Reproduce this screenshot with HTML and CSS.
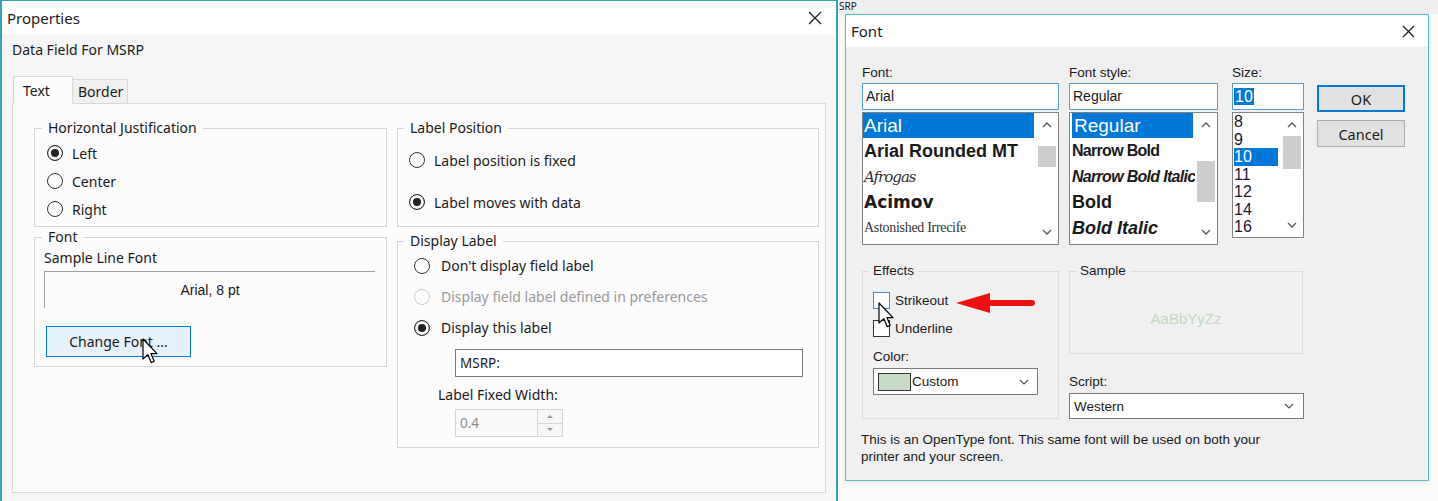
FILE: index.html
```html
<!DOCTYPE html>
<html lang="en">
<head>
  <meta charset="UTF-8" />
  <title>Properties - Font</title>
  <link rel="stylesheet" href="styles.css">
</head>
<body>
  <div class="screen">

    <!-- Properties dialog -->
    <section class="props">
      <div class="titlebar">
        <span class="title">Properties</span>
        <svg class="close" width="14" height="14" viewBox="0 0 14 14"><path d="M1 1L13 13M13 1L1 13" stroke="#222" stroke-width="1.3" fill="none"/></svg>
      </div>

      <div class="props-body">
        <div class="caption">Data Field For MSRP</div>

        <div class="tabs">
          <div class="tab active">Text</div>
          <div class="tab">Border</div>
        </div>

        <div class="tab-panel">
          <div class="col col-left">
            <fieldset class="group hj">
              <legend>Horizontal Justification</legend>
              <div class="radio"><span class="rb on"></span>Left</div>
              <div class="radio"><span class="rb"></span>Center</div>
              <div class="radio"><span class="rb"></span>Right</div>
            </fieldset>

            <fieldset class="group font-group">
              <legend>Font</legend>
              <div class="sample-label">Sample Line Font</div>
              <div class="sample-box">Arial, 8 pt</div>
              <button class="change-font">Change Font ...</button>
            </fieldset>
          </div>

          <div class="col col-right">
            <fieldset class="group lp">
              <legend>Label Position</legend>
              <div class="radio"><span class="rb"></span>Label position is fixed</div>
              <div class="radio"><span class="rb on"></span>Label moves with data</div>
            </fieldset>

            <fieldset class="group dl">
              <legend>Display Label</legend>
              <div class="radio"><span class="rb"></span>Don't display field label</div>
              <div class="radio disabled"><span class="rb"></span>Display field label defined in preferences</div>
              <div class="radio"><span class="rb on"></span>Display this label</div>
              <div class="msrp">MSRP:</div>
              <div class="fixed-label">Label Fixed Width:</div>
              <div class="spin">
                <div class="spin-input">0.4</div>
                <div class="spin-btns">
                  <span class="spin-btn"><i class="tri-up"></i></span>
                  <span class="spin-btn"><i class="tri-down"></i></span>
                </div>
              </div>
            </fieldset>
          </div>
        </div>
      </div>
    </section>

    <!-- desktop behind + Font dialog -->
    <section class="desk">
      <div class="desk-top">SRP</div>

      <div class="font-dlg">
        <div class="fd-title">
          <span>Font</span>
          <svg class="close" width="13" height="13" viewBox="0 0 13 13"><path d="M1 1L12 12M12 1L1 12" stroke="#222" stroke-width="1.3" fill="none"/></svg>
        </div>

        <div class="fd-body">
          <div class="fd-top">
            <div class="fd-col col-font">
              <div class="fd-label">Font:</div>
              <div class="fd-input">Arial</div>
              <div class="fd-list">
                <div class="fd-items">
                  <div class="fi sel">Arial</div>
                  <div class="fi f-rounded">Arial Rounded MT</div>
                  <div class="fi f-afrogas">Afrogas</div>
                  <div class="fi f-acimov">Acimov</div>
                  <div class="fi f-aston">Astonished Irrecife</div>
                </div>
                <div class="vscroll">
                  <span class="arrow"><svg width="10" height="6" viewBox="0 0 10 6"><path d="M1 5L5 1L9 5" fill="none" stroke="#555" stroke-width="1.3"/></svg></span>
                  <div class="track"><div class="thumb thumb-font"></div></div>
                  <span class="arrow"><svg width="10" height="6" viewBox="0 0 10 6"><path d="M1 1L5 5L9 1" fill="none" stroke="#555" stroke-width="1.3"/></svg></span>
                </div>
              </div>
            </div>

            <div class="fd-col col-style">
              <div class="fd-label">Font style:</div>
              <div class="fd-input">Regular</div>
              <div class="fd-list">
                <div class="fd-items">
                  <div class="fi sel">Regular</div>
                  <div class="fi s-narrow">Narrow Bold</div>
                  <div class="fi s-narrow-it">Narrow Bold Italic</div>
                  <div class="fi s-bold">Bold</div>
                  <div class="fi s-bold-it">Bold Italic</div>
                </div>
                <div class="vscroll">
                  <span class="arrow"><svg width="10" height="6" viewBox="0 0 10 6"><path d="M1 5L5 1L9 5" fill="none" stroke="#555" stroke-width="1.3"/></svg></span>
                  <div class="track"><div class="thumb thumb-style"></div></div>
                  <span class="arrow"><svg width="10" height="6" viewBox="0 0 10 6"><path d="M1 1L5 5L9 1" fill="none" stroke="#555" stroke-width="1.3"/></svg></span>
                </div>
              </div>
            </div>

            <div class="fd-col col-size">
              <div class="fd-label">Size:</div>
              <div class="fd-input"><span class="hl">10</span></div>
              <div class="fd-list size-list">
                <div class="fd-items">
                  <div class="si">8</div>
                  <div class="si">9</div>
                  <div class="si sel">10</div>
                  <div class="si">11</div>
                  <div class="si">12</div>
                  <div class="si">14</div>
                  <div class="si">16</div>
                </div>
                <div class="vscroll">
                  <span class="arrow"><svg width="10" height="6" viewBox="0 0 10 6"><path d="M1 5L5 1L9 5" fill="none" stroke="#555" stroke-width="1.3"/></svg></span>
                  <div class="track"><div class="thumb thumb-size"></div></div>
                  <span class="arrow"><svg width="10" height="6" viewBox="0 0 10 6"><path d="M1 1L5 5L9 1" fill="none" stroke="#555" stroke-width="1.3"/></svg></span>
                </div>
              </div>
            </div>

            <div class="fd-col col-btns">
              <button class="btn ok">OK</button>
              <button class="btn">Cancel</button>
            </div>
          </div>

          <div class="fd-lower">
            <fieldset class="fd-group effects">
              <legend>Effects</legend>
              <div class="check"><span class="cb hover"></span>Strikeout</div>
              <div class="check"><span class="cb"></span>Underline</div>
              <div class="fd-label color-label">Color:</div>
              <div class="combo color-combo">
                <span class="swatch"></span>
                <span class="combo-text">Custom</span>
                <svg width="10" height="6" viewBox="0 0 10 6"><path d="M1 1L5 5L9 1" fill="none" stroke="#555" stroke-width="1.2"/></svg>
              </div>
            </fieldset>

            <div class="fd-right">
              <fieldset class="fd-group sample">
                <legend>Sample</legend>
                <div class="sample-text">AaBbYyZz</div>
              </fieldset>
              <div class="fd-label script-label">Script:</div>
              <div class="combo script-combo">
                <span class="combo-text">Western</span>
                <svg width="10" height="6" viewBox="0 0 10 6"><path d="M1 1L5 5L9 1" fill="none" stroke="#555" stroke-width="1.2"/></svg>
              </div>
            </div>
          </div>

          <p class="fd-note">This is an OpenType font. This same font will be used on both your<br>printer and your screen.</p>
        </div>
      </div>
    </section>

    <!-- overlays: mouse pointers and the red arrow -->
    <svg class="cursor cur-left" width="17" height="27" viewBox="0 0 17 27"><path d="M1 1V21L5.8 16.6L9.2 24.6L12.2 23.3L8.9 15.6H15Z" fill="#fff" stroke="#000" stroke-width="1.2" stroke-linejoin="round"/></svg>
    <svg class="cursor cur-right" width="17" height="27" viewBox="0 0 17 27"><path d="M1 1V21L5.8 16.6L9.2 24.6L12.2 23.3L8.9 15.6H15Z" fill="#fff" stroke="#000" stroke-width="1.2" stroke-linejoin="round"/></svg>
    <svg class="red-arrow" width="82" height="26" viewBox="0 0 82 26"><polygon points="1,13 35,3 35,23" fill="#ee1111"/><rect x="32" y="10" width="48" height="6" rx="3" fill="#ee1111"/></svg>
  </div>
</body>
</html>
```

FILE: styles.css
```css
* {
  box-sizing: border-box;
}

body {
  margin: 0;
  width: 1438px;
  height: 501px;
  overflow: hidden;
  font-family: "Noto Sans", sans-serif;
  font-size: 14px;
  color: #1b1b1b;
}

.screen {
  position: relative;
  display: flex;
  height: 501px;
}

/* ---------- Properties dialog ---------- */
.props {
  width: 838px;
  height: 501px;
  border: 2px solid #35a4b0;
  border-top-width: 1px;
  border-bottom: none;
  background: #f6f6f6;
  display: flex;
  flex-direction: column;
}

.titlebar {
  height: 34px;
  background: #fff;
  display: flex;
  align-items: center;
  justify-content: space-between;
  padding: 0 14px 0 5px;
}

.title {
  font-size: 15px;
}

.props-body {
  padding: 6px 10px 0;
}

.caption {
  line-height: 18px;
}

.tabs {
  display: flex;
  align-items: flex-end;
  height: 27px;
  margin-top: 17px;
  padding-left: 1px;
  position: relative;
  z-index: 1;
}

.tab {
  height: 24px;
  width: 55px;
  padding-left: 5px;
  line-height: 24px;
  background: #f0f0f0;
  border: 1px solid #d9d9d9;
  border-left: none;
  border-bottom: none;
}

.tab.active {
  height: 28px;
  width: 60px;
  margin-bottom: -1px;
  padding-left: 9px;
  line-height: 27px;
  background: #fcfcfc;
  border-left: 1px solid #d9d9d9;
}

.tab-panel {
  position: relative;
  height: 390px;
  border: 1px solid #d9d9d9;
  background: #fcfcfc;
  display: flex;
  gap: 10px;
  padding: 15px 6px 0 21px;
}

.col-left {
  width: 353px;
}

.col-right {
  width: 422px;
}

.group {
  margin: 0;
  min-width: 0;
  padding: 0 12px;
  border: 1px solid #d6d6d6;
}

.group legend {
  padding: 0 6px;
  margin-left: -5px;
  line-height: 18px;
}

.radio {
  display: flex;
  align-items: center;
  height: 28px;
}

.rb {
  width: 16px;
  height: 16px;
  border: 1px solid #333;
  border-radius: 50%;
  background: #fff;
  margin-right: 9px;
  flex-shrink: 0;
}

.rb.on {
  background: #222;
  box-shadow: inset 0 0 0 3px #fff;
}

.radio.disabled {
  color: #999;
}

.radio.disabled .rb {
  border-color: #cdcdcd;
}

.hj {
  padding-top: 2px;
  padding-bottom: 3px;
}

.font-group {
  margin-top: 1px;
  padding: 3px 12px 9px;
}

.sample-label {
  line-height: 18px;
  margin-left: -3px;
}

.sample-box {
  width: 331px;
  height: 37px;
  margin: 4px 0 0 -3px;
  border-top: 1px solid #a0a0a0;
  border-left: 1px solid #a0a0a0;
  display: flex;
  align-items: center;
  justify-content: center;
  font-family: "Liberation Sans", Arial, sans-serif;
  font-size: 14px;
}

.change-font {
  display: block;
  width: 145px;
  height: 31px;
  margin: 18px 0 0 -1px;
  padding: 0;
  background: #e5f1fb;
  border: 1px solid #0078d7;
  font-family: "Noto Sans", sans-serif;
  font-size: 14px;
  color: #1b1b1b;
}

.lp {
  padding: 9px 11px 10px;
}

.lp .radio + .radio {
  margin-top: 14px;
}

.dl {
  margin-top: 5px;
  padding: 0 11px 10px;
}

.dl .radio {
  height: 31px;
  margin-left: 5px;
}

.dl .rb {
  margin-right: 11px;
}

.msrp {
  width: 348px;
  height: 28px;
  margin: 6px 0 0 46px;
  padding-left: 4px;
  line-height: 26px;
  font-size: 13.5px;
  background: #fff;
  border: 1px solid #7a7a7a;
}

.fixed-label {
  margin: 9px 0 0 29px;
  line-height: 18px;
}

.spin {
  display: flex;
  height: 28px;
  margin: 5px 0 0 46px;
}

.spin-input {
  width: 83px;
  padding-left: 4px;
  line-height: 26px;
  font-size: 13.5px;
  color: #8c8c8c;
  background: #fafafa;
  border: 1px solid #d5d5d5;
}

.spin-btns {
  width: 25px;
  display: flex;
  flex-direction: column;
}

.spin-btn {
  flex: 1;
  border: 1px solid #d5d5d5;
  border-left: none;
  display: flex;
  align-items: center;
  justify-content: center;
  background: #f7f7f7;
}

.spin-btn + .spin-btn {
  border-top: none;
}

.tri-up,
.tri-down {
  width: 0;
  height: 0;
  border-left: 3px solid transparent;
  border-right: 3px solid transparent;
}

.tri-up {
  border-bottom: 3px solid #9a9a9a;
}

.tri-down {
  border-top: 3px solid #9a9a9a;
}

/* ---------- desktop + Font dialog ---------- */
.desk {
  width: 600px;
  height: 501px;
  background: #fbfbfb;
  display: flex;
  flex-direction: column;
}

.desk-top {
  height: 14px;
  background: #efefef;
  font-size: 10px;
  line-height: 12px;
  padding-left: 1px;
}

.font-dlg {
  width: 584px;
  height: 467px;
  margin-left: 7px;
  border: 1px solid #5bbec7;
  background: #f0f0f0;
  display: flex;
  flex-direction: column;
  font-family: "Liberation Sans", Arial, sans-serif;
  font-size: 13.5px;
  color: #1a1a1a;
  box-shadow: 0 2px 6px rgba(0, 0, 0, 0.08);
}

.fd-title {
  height: 32px;
  flex-shrink: 0;
  background: #fff;
  display: flex;
  align-items: center;
  justify-content: space-between;
  padding: 0 13px 0 5px;
  font-family: "Noto Sans", sans-serif;
  font-size: 15px;
}

.fd-body {
  padding: 17px 0 0 16px;
}

.fd-top {
  display: flex;
  align-items: flex-start;
}

.col-font {
  width: 197px;
}

.col-style {
  width: 149px;
  margin-left: 10px;
}

.col-size {
  width: 72px;
  margin-left: 14px;
}

.col-btns {
  width: 88px;
  margin-left: 13px;
  padding-top: 21px;
}

.fd-label {
  height: 16px;
  line-height: 18px;
}

.fd-input {
  height: 27px;
  margin-top: 3px;
  padding-left: 3px;
  line-height: 25px;
  font-size: 14px;
  background: #fff;
  border: 1px solid #5a9fd8;
}

.col-size .fd-input {
  padding-left: 1px;
  font-size: 16px;
}

.hl {
  background: #0078d7;
  color: #fff;
  padding: 0 1px;
}

.fd-list {
  height: 133px;
  margin-top: 2px;
  background: #fff;
  border: 1px solid #828282;
  display: flex;
  overflow: hidden;
}

.fd-list.size-list {
  height: 126px;
}

.fd-items {
  flex: 1;
  min-width: 0;
  overflow: hidden;
}

.fi {
  height: 25.5px;
  line-height: 26px;
  padding-left: 1px;
  white-space: nowrap;
  overflow: hidden;
  font-size: 18px;
}

.fi.sel {
  height: 25px;
  line-height: 25px;
  background: #0078d7;
  color: #fff;
  font-size: 19px;
  margin-right: 2px;
}

.col-style .fi.sel {
  margin-left: 2px;
}

.col-style .fi {
  padding-left: 2px;
}

.f-rounded {
  font-weight: bold;
}

.f-afrogas {
  font-family: "DejaVu Serif", serif;
  font-style: italic;
  font-size: 15px;
  letter-spacing: -1px;
  color: #333;
}

.f-acimov {
  font-family: "DejaVu Sans", sans-serif;
  font-weight: bold;
  font-size: 17px;
}

.f-aston {
  font-family: "Liberation Serif", serif;
  font-size: 14px;
  letter-spacing: -0.3px;
  color: #333;
}

.s-narrow,
.s-narrow-it {
  font-weight: bold;
  font-size: 16px;
  letter-spacing: -0.7px;
}

.s-narrow-it {
  font-style: italic;
}

.s-bold {
  font-weight: bold;
}

.s-bold-it {
  font-weight: bold;
  font-style: italic;
}

.si {
  height: 17.5px;
  line-height: 18.5px;
  padding-left: 1px;
  font-size: 16px;
  color: #1d1530;
}

.si.sel {
  background: #0078d7;
  color: #fff;
  margin: 0 3px 0 1px;
  padding-left: 0;
}

.vscroll {
  width: 22px;
  display: flex;
  flex-direction: column;
}

.arrow {
  height: 24px;
  display: flex;
  align-items: center;
  justify-content: center;
  flex-shrink: 0;
}

.track {
  flex: 1;
}

.thumb {
  margin: 0 2px;
  background: #cdcdcd;
}

.thumb-font {
  margin-top: 9px;
  height: 21px;
}

.thumb-style {
  margin-top: 24px;
  height: 41px;
}

.thumb-size {
  margin-top: -1px;
  height: 33px;
}

.btn {
  display: block;
  width: 88px;
  height: 27px;
  padding: 0;
  background: #e1e1e1;
  border: 1px solid #adadad;
  font-family: "Noto Sans", sans-serif;
  font-size: 14.5px;
  color: #1a1a1a;
}

.btn.ok {
  border: 2px solid #0078d7;
}

.btn + .btn {
  margin-top: 8px;
}

.fd-lower {
  display: flex;
  margin-top: 18px;
}

.fd-group {
  margin: 0;
  min-width: 0;
  border: 1px solid #dcdcdc;
  padding: 0 10px;
}

.fd-group legend {
  padding: 0 4px;
  margin-left: -4px;
  line-height: 16px;
}

.effects {
  width: 197px;
  padding: 7px 10px 20px;
}

.check {
  display: flex;
  align-items: center;
  height: 28px;
}

.cb {
  width: 17px;
  height: 17px;
  background: #fff;
  border: 1px solid #333;
  margin-right: 5px;
}

.cb.hover {
  border-color: #3c8fd9;
}

.color-label {
  margin-top: 6px;
}

.combo {
  display: flex;
  align-items: center;
  background: #fff;
  border: 1px solid #7a7a7a;
}

.combo-text {
  flex: 1;
}

.color-combo {
  width: 165px;
  height: 27px;
  margin-top: 4px;
  padding: 0 8px 0 4px;
}

.swatch {
  width: 33px;
  height: 18px;
  margin-right: 1px;
  background: #c6dbc6;
  border: 1px solid #333;
}

.fd-right {
  width: 235px;
  margin-left: 10px;
}

.sample {
  width: 234px;
}

.sample-text {
  height: 74px;
  padding-top: 4px;
  display: flex;
  align-items: center;
  justify-content: center;
  font-size: 15px;
  color: #c4d6c4;
}

.script-label {
  margin-top: 19px;
}

.script-combo {
  height: 26px;
  margin-top: 4px;
  padding: 0 9px 0 4px;
}

.fd-note {
  margin: 12px 0 0 -1px;
  line-height: 17px;
}

/* ---------- overlays ---------- */
.cursor {
  position: absolute;
}

.cur-left {
  left: 142px;
  top: 338px;
}

.cur-right {
  left: 878px;
  top: 302px;
}

.red-arrow {
  position: absolute;
  left: 955px;
  top: 290px;
}
```
